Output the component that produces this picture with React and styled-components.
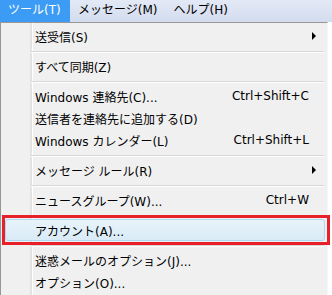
import React from 'react';
import styled, { createGlobalStyle, css } from 'styled-components';

const GlobalStyle = createGlobalStyle`
  body {
    margin: 0;
    background: #ffffff;
    font-family: "DejaVu Sans", "Noto Sans CJK JP", sans-serif;
    font-size: 12px;
    color: #000;
  }
  * { box-sizing: border-box; }
`;

const menus = [
  { label: 'ツール(T)', active: true },
  { label: 'メッセージ(M)' },
  { label: 'ヘルプ(H)' },
];

const items = [
  { label: '送受信(S)', sub: true },
  { sep: true },
  { label: 'すべて同期(Z)' },
  { sep: true },
  { label: 'Windows 連絡先(C)...', key: 'Ctrl+Shift+C' },
  { label: '送信者を連絡先に追加する(D)' },
  { label: 'Windows カレンダー(L)', key: 'Ctrl+Shift+L' },
  { sep: true },
  { label: 'メッセージ ルール(R)', sub: true },
  { sep: true },
  { label: 'ニュースグループ(W)...', key: 'Ctrl+W' },
  { sep: true },
  { label: 'アカウント(A)...', selected: true },
  { sep: true },
  { label: '迷惑メールのオプション(J)...' },
  { label: 'オプション(O)...' },
];

const App = () => {
  return (
    <Page>
      <GlobalStyle />
      <MenuBar>
        {menus.map((m, i) => (
          <BarItem key={i} $active={m.active}>{m.label}</BarItem>
        ))}
      </MenuBar>
      <Dropdown>
        {items.map((it, i) =>
          it.sep ? (
            <Separator key={i} />
          ) : (
            <Item key={i} $selected={it.selected}>
              <Label>{it.label}</Label>
              {it.key && <Shortcut>{it.key}</Shortcut>}
              {it.sub && <Arrow />}
            </Item>
          )
        )}
      </Dropdown>
    </Page>
  );
};

export default App;

const Page = styled.div`
  width: 332px;
  height: 295px;
  overflow: hidden;
`;

const MenuBar = styled.div`
  display: flex;
  height: 22px;
  background: linear-gradient(#e3e9f5, #d3dcef);
`;

const BarItem = styled.div`
  height: 22px;
  line-height: 21px;
  padding: 0 8px;
  white-space: nowrap;
  ${p => p.$active && css`
    background: #3c9bf4;
    color: #fff;
    width: 70px;
  `}
`;

const Dropdown = styled.div`
  position: relative;
  width: 328px;
  height: 290px;
  padding: 2px;
  background: #f0f0f0;
  border-top: 1px solid #979797;
  border-left: 1px solid #979797;
  border-right: 1px solid #f7f7f7;

  &::before {
    content: '';
    position: absolute;
    top: 0;
    bottom: 0;
    left: 29px;
    width: 2px;
    background: #e2e3e3;
    border-right: 1px solid #ffffff;
  }
`;

const Item = styled.div`
  position: relative;
  display: flex;
  align-items: center;
  height: 22px;
  padding-left: 32px;
  padding-right: 16px;
  white-space: nowrap;

  ${p => p.$selected && css`
    margin: 0 0 0 2px;
    padding-left: 29px;
    background: linear-gradient(#e8f3fb, #d9ebf6);
    border: 1px solid #acd9f2;
    border-radius: 3px;

    &::after {
      content: '';
      position: absolute;
      top: -5px;
      bottom: -5px;
      left: -4px;
      right: -6px;
      border: 3px solid #e8202a;
      z-index: 2;
    }
  `}
`;

const Label = styled.span`
  flex: 1;
  position: relative;
  z-index: 1;
`;

const Shortcut = styled.span`
  position: relative;
  z-index: 1;
`;

const Arrow = styled.span`
  position: absolute;
  right: 9px;
  top: 7px;
  width: 0;
  height: 0;
  border-top: 4px solid transparent;
  border-bottom: 4px solid transparent;
  border-left: 4px solid #000;
`;

const Separator = styled.div`
  height: 8px;
  padding-top: 4px;
  margin-left: 28px;
  margin-right: 1px;
  position: relative;
  z-index: 1;

  &::after {
    content: '';
    display: block;
    height: 1px;
    background: #d7d7d7;
    box-shadow: 0 1px 0 #ffffff;
  }
`;
